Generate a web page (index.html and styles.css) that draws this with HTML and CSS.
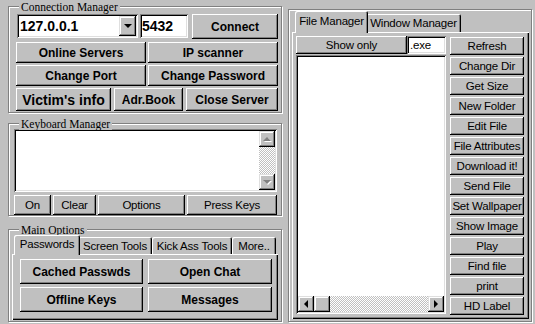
FILE: index.html
```html
<!DOCTYPE html>
<html lang="en">
<head>
<meta charset="UTF-8" />
<title>Remote Control</title>
<link rel="stylesheet" href="styles.css">
</head>
<body>
<div class="app">

  <div class="left">
    <!-- connection -->
    <div class="group conn">
      <span class="group-title">Connection Manager</span>
      <div class="row row-top">
        <div class="field combo">
          <span class="combo-text">127.0.0.1</span>
          <span class="combo-btn"><i class="arrow-down"></i></span>
        </div>
        <div class="field port">5432</div>
        <button class="btn bold connect">Connect</button>
      </div>
      <div class="row row-mid">
        <button class="btn bold half">Online Servers</button>
        <button class="btn bold half">IP scanner</button>
      </div>
      <div class="row row-mid">
        <button class="btn bold half">Change Port</button>
        <button class="btn bold half">Change Password</button>
      </div>
      <div class="row row-last">
        <button class="btn bold big victim">Victim's info</button>
        <button class="btn bold adr">Adr.Book</button>
        <button class="btn bold close">Close Server</button>
      </div>
    </div>

    <!-- keyboard -->
    <div class="group keys">
      <span class="group-title">Keyboard Manager</span>
      <div class="field memo">
        <div class="memo-text"></div>
        <div class="vscroll">
          <span class="sbtn"><i class="arrow-up"></i></span>
          <span class="track"></span>
          <span class="sbtn"><i class="arrow-down gray"></i></span>
        </div>
      </div>
      <div class="row key-btns">
        <button class="btn k-on">On</button>
        <button class="btn k-clear">Clear</button>
        <button class="btn k-opt">Options</button>
        <button class="btn k-press">Press Keys</button>
      </div>
    </div>

    <!-- main options -->
    <div class="group opts">
      <span class="group-title">Main Options</span>
      <div class="tabs">
        <span class="tab active t-pass">Passwords</span>
        <span class="tab t-screen">Screen Tools</span>
        <span class="tab t-kick">Kick Ass Tools</span>
        <span class="tab t-more">More..</span>
      </div>
      <div class="tabpanel opt-panel">
        <button class="btn bold">Cached Passwds</button>
        <button class="btn bold">Open Chat</button>
        <button class="btn bold">Offline Keys</button>
        <button class="btn bold">Messages</button>
      </div>
    </div>
  </div>

  <!-- file manager -->
  <div class="group rpanel">
    <div class="tabs rtabs">
      <span class="tab active t-fm">File Manager</span>
      <span class="tab t-wm">Window Manager</span>
    </div>
    <div class="tabpanel fm-panel">
      <div class="fm-left">
        <div class="row fm-filter">
          <button class="btn show-only">Show only</button>
          <div class="field ext">.exe</div>
        </div>
        <div class="field file-list">
          <div class="list-body"></div>
          <div class="hscroll">
            <span class="sbtn"><i class="arrow-left"></i></span>
            <span class="sbtn thumb"></span>
            <span class="track"></span>
            <span class="sbtn"><i class="arrow-right"></i></span>
          </div>
        </div>
      </div>
      <div class="fm-right">
        <button class="btn">Refresh</button>
        <button class="btn">Change Dir</button>
        <button class="btn">Get Size</button>
        <button class="btn">New Folder</button>
        <button class="btn">Edit File</button>
        <button class="btn">File Attributes</button>
        <button class="btn">Download it!</button>
        <button class="btn">Send File</button>
        <button class="btn">Set Wallpaper</button>
        <button class="btn">Show Image</button>
        <button class="btn">Play</button>
        <button class="btn">Find file</button>
        <button class="btn">print</button>
        <button class="btn">HD Label</button>
      </div>
    </div>
  </div>

</div>
</body>
</html>
```

FILE: styles.css
```css
* {
  box-sizing: border-box;
}

body {
  margin: 0;
  width: 535px;
  height: 324px;
  overflow: hidden;
  background: #c0c0c0;
  font-family: "Liberation Sans", Arial, sans-serif;
  font-size: 11.5px;
  letter-spacing: -0.2px;
  color: #000;
}

.app {
  display: flex;
  align-items: flex-start;
  padding-left: 8px;
}

.left {
  width: 274px;
  margin-top: 6px;
  display: flex;
  flex-direction: column;
}

.row {
  display: flex;
}

/* etched group box */
.group {
  position: relative;
  border: 1px solid #808080;
  box-shadow: inset 1px 1px #fff, 1px 1px #fff;
}
.group-title {
  position: absolute;
  left: 10px;
  top: -6px;
  padding: 0 2px;
  background: #c0c0c0;
  font-family: "Liberation Serif", "Times New Roman", serif;
  font-size: 11.5px;
  letter-spacing: 0;
  line-height: 12px;
}

/* raised button */
button {
  font: inherit;
  letter-spacing: inherit;
  color: #000;
  border: 0;
  margin: 0;
  padding: 0;
}
.btn {
  display: flex;
  align-items: center;
  justify-content: center;
  background: #c0c0c0;
  box-shadow: inset -1px -1px #000, inset 1px 1px #fff, inset -2px -2px #808080;
  white-space: nowrap;
}
.bold {
  font-weight: bold;
  font-size: 12px;
  letter-spacing: 0;
}
.big {
  font-size: 14px;
}

/* sunken field */
.field {
  background: #fff;
  box-shadow: inset 1px 1px #808080, inset -1px -1px #fff, inset 2px 2px #000, inset -2px -2px #dfdfdf;
}

/* connection manager */
.conn {
  height: 107px;
  padding: 7px 3px 1px 7px;
}
.row-top {
  height: 25px;
  align-items: flex-start;
}
.combo {
  width: 121px;
  height: 24px;
  margin-left: 1px;
  padding: 2px;
  display: flex;
}
.combo-text {
  flex: 1;
  padding-left: 1px;
  font-weight: bold;
  font-size: 14px;
  letter-spacing: 0;
  line-height: 20px;
}
.combo-btn {
  width: 17px;
  display: flex;
  align-items: center;
  justify-content: center;
  background: #c0c0c0;
  box-shadow: inset -1px -1px #000, inset 1px 1px #dfdfdf, inset -2px -2px #808080, inset 2px 2px #fff;
}
.port {
  width: 48px;
  height: 24px;
  margin-left: 2px;
  padding: 0 2px;
  font-weight: bold;
  font-size: 14px;
  letter-spacing: 0;
  line-height: 24px;
}
.connect {
  width: 86px;
  height: 25px;
  margin-left: 4px;
}
.row-mid {
  height: 21px;
  margin-top: 2px;
  gap: 2px;
}
.row-top + .row-mid {
  margin-top: 3px;
}
.half {
  width: 130px;
}
.row-last {
  height: 23px;
  margin-top: 2px;
  gap: 3px;
}
.victim { width: 95px; }
.adr { width: 69px; }
.close { width: 92px; }

/* keyboard manager */
.keys {
  margin-top: 10px;
  height: 93px;
  padding: 5px 4px 0 5px;
}
.memo {
  height: 63px;
  padding: 2px;
  display: flex;
}
.memo-text {
  flex: 1;
}
.vscroll {
  width: 16px;
  display: flex;
  flex-direction: column;
}
.sbtn {
  width: 16px;
  height: 16px;
  flex: none;
  display: flex;
  align-items: center;
  justify-content: center;
  background: #c0c0c0;
  box-shadow: inset -1px -1px #000, inset 1px 1px #dfdfdf, inset -2px -2px #808080, inset 2px 2px #fff;
}
.track {
  flex: 1;
  background: repeating-conic-gradient(#c0c0c0 0 25%, #fff 0 50%) 0 0 / 2px 2px;
}
.key-btns {
  height: 20px;
  margin-top: 3px;
  gap: 2px;
}
.k-on { width: 37px; }
.k-clear { width: 43px; }
.k-opt { width: 87px; }
.k-press { width: 90px; }

/* arrows */
.arrow-down,
.arrow-up {
  width: 0;
  height: 0;
  border-left: 4px solid transparent;
  border-right: 4px solid transparent;
}
.arrow-down {
  border-top: 4px solid #000;
}
.arrow-down.gray {
  border-top-color: #808080;
  filter: drop-shadow(1px 1px 0 #fff);
}
.arrow-up {
  border-bottom: 4px solid #808080;
  filter: drop-shadow(1px 1px 0 #fff);
}
.arrow-left,
.arrow-right {
  width: 0;
  height: 0;
  border-top: 4px solid transparent;
  border-bottom: 4px solid transparent;
}
.arrow-left {
  border-right: 4px solid #000;
}
.arrow-right {
  border-left: 4px solid #000;
}

/* tabs */
.tabs {
  display: flex;
  align-items: flex-end;
  height: 19px;
  padding-left: 4px;
}
.tab {
  height: 17px;
  display: flex;
  align-items: center;
  justify-content: center;
  background: #c0c0c0;
  border-radius: 2px 2px 0 0;
  box-shadow: inset 1px 1px #fff, inset -1px 0 #000, inset -2px 0 #808080;
  white-space: nowrap;
}
.tab.active {
  position: relative;
  z-index: 1;
  height: 20px;
  margin: 0 -2px -1px;
  padding-bottom: 2px;
}
.tabpanel {
  box-shadow: inset 1px 1px #fff, inset -1px -1px #000, inset -2px -2px #808080;
}

/* main options */
.opts {
  margin-top: 13px;
  height: 93px;
  padding: 5px 3px 1px 3px;
}
.t-pass { width: 66px; }
.t-screen { width: 74px; }
.t-kick { width: 80px; }
.t-more { width: 44px; }
.opt-panel {
  height: 66px;
  padding: 5px 0 0 8px;
  display: grid;
  grid-template-columns: 123px 124px;
  grid-template-rows: 25px 25px;
  gap: 3px 5px;
  align-content: start;
}

/* file manager */
.rpanel {
  width: 244px;
  height: 313px;
  margin-left: 6px;
  margin-top: 9px;
  padding: 1px 2px 2px 3px;
}
.rtabs {
  height: 21px;
  padding-left: 5px;
}
.rtabs .tab {
  height: 18px;
}
.rtabs .tab.active {
  height: 22px;
}
.t-fm { width: 73px; }
.t-wm { width: 95px; }
.fm-panel {
  height: 287px;
  padding: 4px 0 0 4px;
  display: flex;
  gap: 4px;
}
.fm-left {
  width: 150px;
  display: flex;
  flex-direction: column;
}
.fm-filter {
  height: 18px;
}
.show-only {
  width: 111px;
}
.ext {
  width: 39px;
  padding-left: 3px;
  line-height: 18px;
}
.file-list {
  height: 259px;
  margin-top: 1px;
  padding: 2px;
  display: flex;
  flex-direction: column;
}
.list-body {
  flex: 1;
}
.hscroll {
  height: 16px;
  display: flex;
}
.fm-right {
  width: 74px;
  padding-top: 1px;
  display: flex;
  flex-direction: column;
  gap: 2px;
}
.fm-right .btn {
  height: 18px;
}
```
